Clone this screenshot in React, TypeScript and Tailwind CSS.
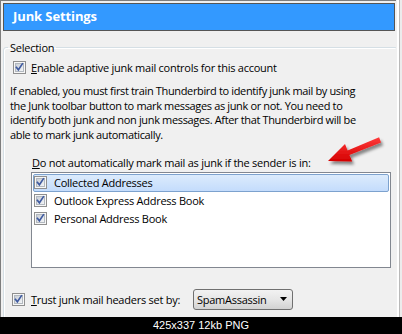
import React from "react";

const CheckBox = () => (
  <span className="flex h-[13px] w-[13px] shrink-0 items-center justify-center border border-[#8f8f8f] bg-[#f7f7f7]">
    <span className="flex h-[9px] w-[9px] items-center justify-center border border-[#b2b8bf] bg-gradient-to-br from-[#c9ced6] to-[#f3f5f7]">
      <svg viewBox="0 0 9 9" className="h-[9px] w-[9px] overflow-visible">
        <path
          d="M1.4 4.3 L3.4 6.8 L7.4 0.8"
          fill="none"
          stroke="#3f5aa0"
          strokeWidth="1.6"
          strokeLinecap="square"
        />
      </svg>
    </span>
  </span>
);

const addressBooks = [
  { name: "Collected Addresses", selected: true },
  { name: "Outlook Express Address Book", selected: false },
  { name: "Personal Address Book", selected: false },
];

const RedArrow = () => (
  <svg
    className="absolute left-[318px] top-[130px] h-[44px] w-[72px] overflow-visible"
    viewBox="0 0 72 44"
  >
    <defs>
      <linearGradient id="arrowRed" x1="0" y1="0" x2="0" y2="1">
        <stop offset="0" stopColor="#ff3b3b" />
        <stop offset="1" stopColor="#d40000" />
      </linearGradient>
      <filter id="arrowShadow" x="-30%" y="-30%" width="160%" height="180%">
        <feDropShadow dx="2" dy="3" stdDeviation="1.8" floodColor="#000" floodOpacity="0.45" />
      </filter>
    </defs>
    <polygon
      points="10,31 27,14 29.6,20.5 61.1,7.2 63.1,12.6 31.4,25 34.2,31.4"
      fill="url(#arrowRed)"
      filter="url(#arrowShadow)"
    />
  </svg>
);

export default function App() {
  return (
    <div className="relative flex h-[334px] w-[402px] flex-col overflow-hidden bg-[#f0f0f0] font-['Open_Sans',sans-serif] text-[11px] tracking-[-0.25px] text-black">
      <div className="flex h-[317px] shrink-0 overflow-hidden">
        <div className="flex w-[396px] shrink-0 flex-col border-l border-t border-[#7d7d7d]">
          {/* Title bar */}
          <div className="ml-[2px] mt-[2px] flex h-[28px] w-[392px] shrink-0 items-center border border-[#555555] bg-[#3399ff] pl-[9px] text-[13px] font-bold tracking-[-0.1px] text-white">
            Junk Settings
          </div>

          {/* Selection group */}
          <fieldset className="ml-[2px] mt-[9px] h-[290px] w-[393px] shrink-0 rounded-[3px] border border-[#d5dfe5] px-[6px] shadow-[inset_1px_1px_0_#ffffff]">
            <legend className="-ml-[2px] px-[2px] leading-[15px]">Selection</legend>

            <div className="ml-[3px] mt-[5px] flex h-[15px] items-center gap-[5px] leading-[15px]">
              <CheckBox />
              <span>
                <span className="underline">E</span>nable adaptive junk mail controls for this account
              </span>
            </div>

            <p className="mt-[9px] leading-[14.7px] tracking-[-0.35px]">
              If enabled, you must first train Thunderbird to identify junk mail by using
              <br />
              the Junk toolbar button to mark messages as junk or not. You need to
              <br />
              identify both junk and non junk messages. After that Thunderbird will be
              <br />
              able to mark junk automatically.
            </p>

            <div className="ml-[22px] mt-[12px] leading-[15px]">
              <span className="underline">D</span>o not automatically mark mail as junk if the sender is in:
            </div>

            <div className="ml-[21px] mt-[2px] h-[96px] w-[360px] border border-[#828790] bg-white p-[1px]">
              {addressBooks.map((b) => (
                <div
                  key={b.name}
                  className={`flex h-[18px] items-center gap-[7px] rounded-[2px] border ${
                    b.selected
                      ? "border-[#7da2ce] bg-gradient-to-b from-[#dcebfc] to-[#c4dcfc]"
                      : "border-transparent"
                  }`}
                >
                  <CheckBox />
                  <span className="leading-[15px]">{b.name}</span>
                </div>
              ))}
            </div>

            <div className="mt-[21px] flex h-[21px] items-center">
              <span className="ml-[2px]">
                <CheckBox />
              </span>
              <span className="ml-[6px] w-[162px] leading-[15px]">
                <span className="underline">T</span>rust junk mail headers set by:
              </span>
              <div className="flex h-[21px] w-[100px] items-center justify-between rounded-[3px] border border-[#707070] bg-gradient-to-b from-[#f2f2f2] via-[#e6e6e6] to-[#d2d2d2] pl-[3px] pr-[5px]">
                <span className="leading-[15px]">SpamAssassin</span>
                <svg viewBox="0 0 7 4" className="h-[4px] w-[7px]">
                  <polygon points="0,0 7,0 3.5,4" fill="#000" />
                </svg>
              </div>
            </div>
          </fieldset>
        </div>

        {/* window edge */}
        <div className="w-[1px] bg-[#f0f0f0]" />
        <div className="w-[2px] bg-white" />
        <div className="w-[1px] bg-[#b9b9b9]" />
        <div className="w-[2px] bg-[#ececec]" />
      </div>

      {/* Footer */}
      <div className="flex h-[17px] shrink-0 items-center justify-center bg-black font-['Liberation_Sans',Arial,sans-serif] text-[11px] tracking-normal text-white">
        425x337 12kb PNG
      </div>

      <RedArrow />
    </div>
  );
}
